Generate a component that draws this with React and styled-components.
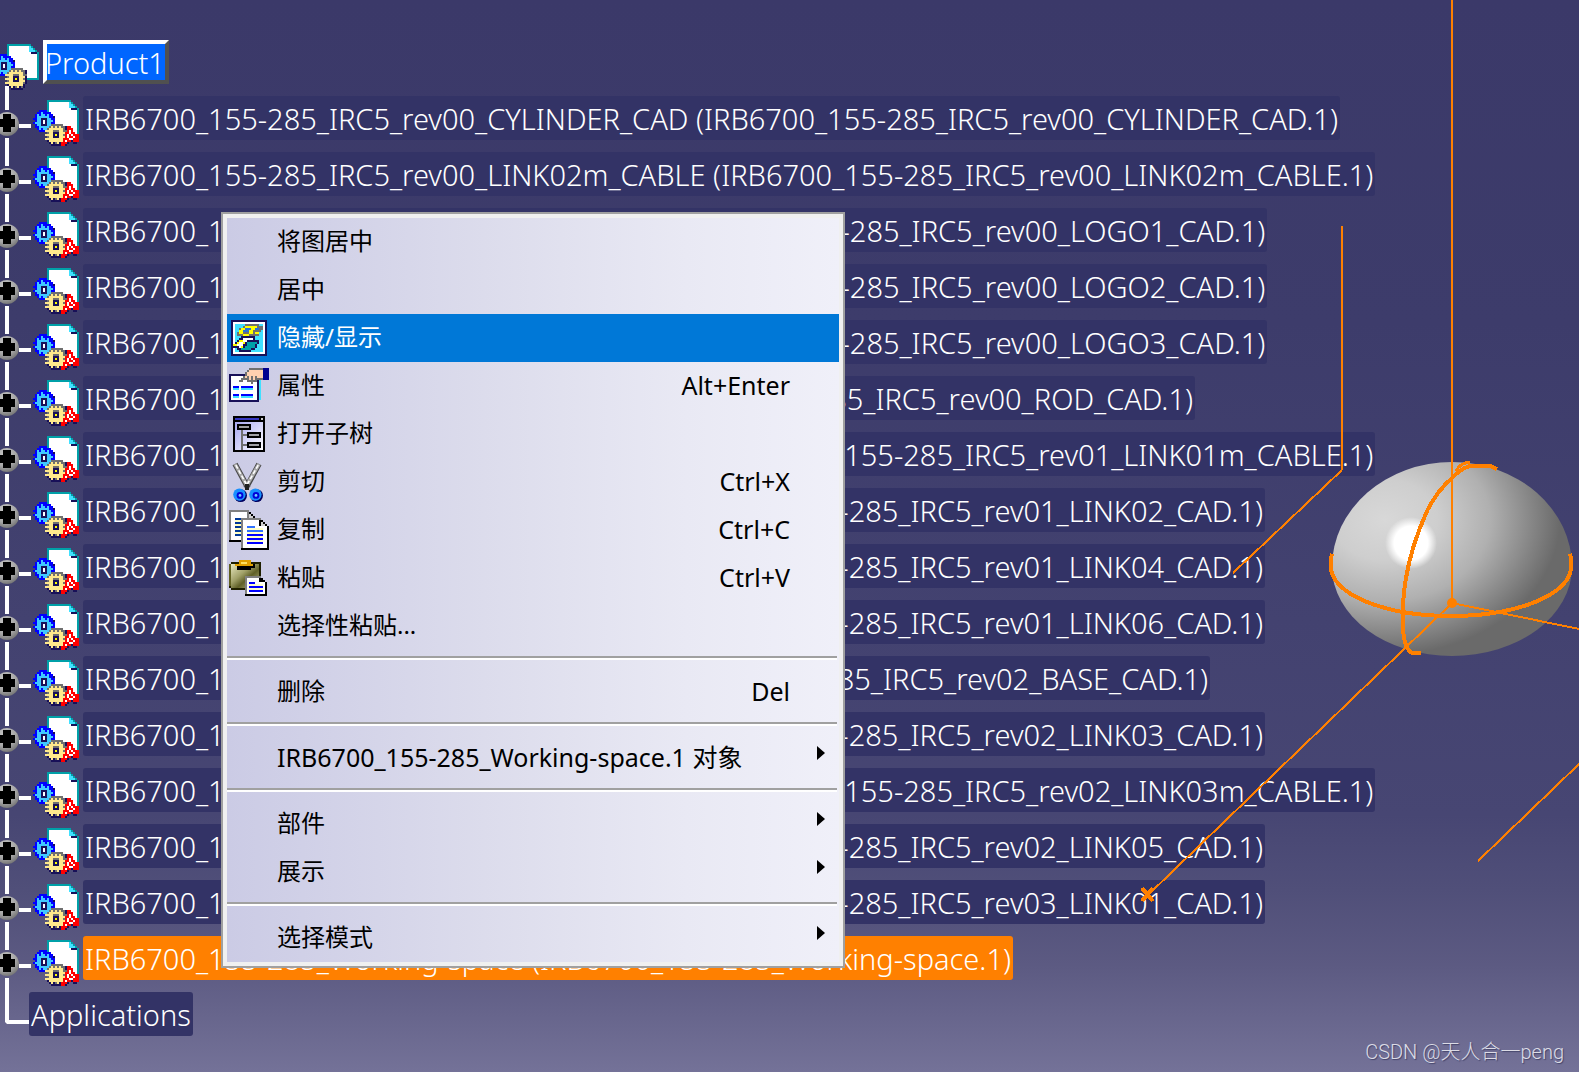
import React from 'react';
import styled, { createGlobalStyle } from 'styled-components';

const GlobalStyle = createGlobalStyle`
  *, *::before, *::after { box-sizing: border-box; }
  body { margin: 0; font-family: 'Noto Sans', 'Noto Sans CJK SC', sans-serif; }
  button { font: inherit; color: inherit; background: none; border: 0; margin: 0; padding: 0; text-align: left; }
`;

const Viewport = styled.main`
  position: relative;
  min-height: 100vh;
  overflow: hidden;
  background: linear-gradient(180deg, #3b3969 0%, #3d3c6b 30%, #434270 58%, #474673 76%, #504f79 83%, #5c5a82 90%, #747298 100%);
`;

const Tree = styled.ul`
  list-style: none;
  margin: 0;
  padding: 40px 0 0;
  color: #fff;
  font-size: 29px;
  font-weight: 300;
`;

const TreeRow = styled.li`
  display: flex;
  align-items: flex-start;
  height: 56px;
`;

const Toggle = styled.button`
  flex: none;
  width: 31px;
  height: 56px;
  margin-right: 2px;
`;

const RowArt = styled.svg`
  display: block;
  flex: none;
  width: ${p => p.$width}px;
  height: 56px;
`;

const NodeLabel = styled.button`
  height: 44px;
  margin-left: 4px;
  padding: 2px 2px 0;
  line-height: 42px;
  white-space: pre;
  border-radius: 3px;
  background: ${p => (p.$active ? '#ff8000' : '#333366')};
`;

const RootLabel = styled(NodeLabel)`
  width: 126px;
  line-height: 34px;
  padding: 2px 0 0;
  text-indent: -2px;
  border: 4px solid;
  border-color: #fff #505050 #505050 #fff;
  border-radius: 0;
  background: #0066ff;
`;

const EndLabel = styled(NodeLabel)`
  margin-left: -2px;
`;

const Scene = styled.svg`
  position: absolute;
  top: 0;
  left: 0;
  width: 100%;
  height: 100%;
  pointer-events: none;
`;

const Menu = styled.div`
  position: absolute;
  top: 212px;
  left: 221px;
  width: 624px;
  padding: 4px;
  border: 2px solid #a0a0a0;
  background: linear-gradient(90deg, #cbcbe5 0%, #dcdcec 42%, #e9e9f4 75%, #f0f0f9 100%) content-box, #f0f0f0;
  color: #000;
  font-size: 24px;
`;

const MenuItem = styled.button`
  display: flex;
  align-items: center;
  width: 100%;
  height: 48px;
  padding-left: 2px;
  white-space: pre;
  color: ${p => (p.$active ? '#fff' : '#000')};
  background: ${p => (p.$active ? '#0078d7' : 'transparent')};
`;

const IconSlot = styled.span`
  flex: none;
  width: 40px;
  height: 40px;
  margin-right: 8px;
  svg { display: block; width: 40px; height: 40px; }
`;

const ItemText = styled.span`
  flex: 1;
  padding-bottom: 2px;
  line-height: 46px;
  font-size: ${p => (p.$latin ? 25 : 24)}px;
`;

const Shortcut = styled.span`
  margin-right: 49px;
  padding-bottom: 2px;
  line-height: 46px;
  font-size: 25px;
`;

const SubArrow = styled.span`
  align-self: flex-start;
  margin: 12px 14px 0 0;
  border: solid transparent;
  border-width: 7px 0 7px 8px;
  border-left-color: #000;
`;

const Separator = styled.hr`
  height: 4px;
  margin: 6px 2px 8px 0;
  border: 0;
  border-top: 2px solid #a0a0a0;
  border-bottom: 2px solid #fff;
`;

const Watermark = styled.footer`
  position: absolute;
  right: 15px;
  bottom: 7px;
  font: 300 20px/26px Roboto, 'Noto Sans CJK SC', sans-serif;
  color: #dcdce6;
  text-shadow: 1px 1px 1px #44446a;
`;

const COLORS = {
  n: '#181058', b: '#0000ff', c: '#40c8ff', w: '#ffffff', g: '#707070',
  y: '#ffe98c', Y: '#ffff00', r: '#ff0000',
};

function Pixels({ map, x = 0, y = 0 }) {
  return (
    <g transform={`translate(${x} ${y})`} shapeRendering="crispEdges">
      {map.map((line, row) =>
        [...line].map((ch, col) =>
          COLORS[ch] ? <rect key={`${row}-${col}`} x={col} y={row} width="1" height="1" fill={COLORS[ch]} /> : null
        )
      )}
    </g>
  );
}

const BLUE_GEAR = [
  '...bbbb....',
  '..bbcbbbb..',
  '.bcbccbcbb.',
  '.bccccccbbn',
  'bbccnnnccbb',
  '.bccnwncccb',
  'bcccnwnccbb',
  '.bccnnnccbn',
  '.bbccccccb.',
  '..bcbccbbn.',
  '...bbbbnn..',
];
const YELLOW_GEAR = [
  '...gggggg..',
  '..gygygyggn',
  '.gyyyyyyygn',
  'yyyygggyygg',
  '.gyynnnyyyn',
  'yyyynYnyygn',
  '.gyynnnyyyn',
  'yyyyyyyyygn',
  '.nyyyyyyyn.',
  '..nyngyngn.',
  '...nnnnnn..',
];
const RED_MARK = [
  '...rr....',
  '...rrr...',
  '...rwr...',
  '..rrwrr..',
  '..rwrwrrr',
  '..rwrrwrr',
  '.rrrwwrrr',
  '.rwrrnrrr',
  'rrrn..nn.',
  'rrn......',
];

function ProductIcon({ mark }) {
  return (
    <>
      <g shapeRendering="crispEdges">
        <path d="M7 0H19V1H20V2H21V3H22V4H23V18H7Z" fill="#00a0a8" />
        <path d="M8 1H18V4H22V17H8Z" fill="#fff" />
        <path d="M18 1H19V2H20V3H21V4H18Z" fill="#40e0ff" />
        <path d="M18 4H22V5H19V4Z" fill="#181058" />
      </g>
      <Pixels map={BLUE_GEAR} x={0} y={5} />
      <Pixels map={YELLOW_GEAR} x={6} y={12} />
      {mark && <Pixels map={RED_MARK} x={14} y={13} />}
    </>
  );
}

function Expander() {
  return (
    <RowArt $width={31} viewBox="0 0 31 56" aria-hidden="true">
      <path d="M5 0H9V14H5ZM5 42H9V56H5ZM19 28H31V32H19Z" fill="#fff" />
      <circle cx="7" cy="28" r="12" fill="url(#ball)" />
      <path d="M3 18H11V23H15V31H11V36H3V31H-1V23H3Z" fill="#000" />
    </RowArt>
  );
}

const node = name => `IRB6700_155-285_${name} (IRB6700_155-285_${name}.1)`;

const NODES = [
  'IRC5_rev00_CYLINDER_CAD', 'IRC5_rev00_LINK02m_CABLE', 'IRC5_rev00_LOGO1_CAD', 'IRC5_rev00_LOGO2_CAD',
  'IRC5_rev00_LOGO3_CAD', 'IRC5_rev00_ROD_CAD', 'IRC5_rev01_LINK01m_CABLE', 'IRC5_rev01_LINK02_CAD',
  'IRC5_rev01_LINK04_CAD', 'IRC5_rev01_LINK06_CAD', 'IRC5_rev02_BASE_CAD', 'IRC5_rev02_LINK03_CAD',
  'IRC5_rev02_LINK03m_CABLE', 'IRC5_rev02_LINK05_CAD', 'IRC5_rev03_LINK01_CAD', 'Working-space',
];

const HideShowIcon = () => (
  <svg viewBox="0 0 20 20" shapeRendering="crispEdges">
    <path d="M1 1H19V19H1Z" fill="#181058" />
    <path d="M2 2H18V18H2Z" fill="#fff" />
    <path d="M3 3H17V17H3Z" fill="#40e0ff" />
    <path d="M8 3H15V4H17V6H16V7H15V9H12V10H6V9H4V7H5V5H7V4H8Z" fill="#707070" />
    <path d="M8 4H14V5H8ZM6 5H8V6H6ZM11 5H13V6H11ZM5 6H7V8H5ZM10 6H12V8H10ZM7 8H10V9H7ZM13 7H15V8H13Z" fill="#ffff00" />
    <path d="M8 5H11V6H10V7H7V6H8ZM13 5H15V6H13Z" fill="#2870d8" />
    <path d="M6 9H13V11H15V13H14V15H13V16H11V17H5V16H4V15H2V13H3V12H4V11H5V10H6Z" fill="#181058" />
    <path d="M7 10H12V11H9V12H8V13H7V14H6V15H5V14H3V13H4V12H5V11H7Z" fill="#fff" />
    <path d="M5 11H7V12H5ZM4 12H5V13H4ZM7 12H8V13H7ZM2 13H4V14H2ZM6 14H7V15H6Z" fill="#ffff00" />
    <path d="M9 12H14V13H13V15H11V16H6V15H8V14H9Z" fill="#00a0a8" />
  </svg>
);

const PropertiesIcon = () => (
  <svg viewBox="0 0 20 20" shapeRendering="crispEdges">
    <path d="M15 7H16V17H15Z" fill="#40e0ff" />
    <path d="M0 4H15V18H0Z" fill="#181058" />
    <path d="M1 5H14V17H1Z" fill="#fff" />
    <path d="M2 10H5V11H2ZM6 10H12V11H6ZM2 14H5V15H2ZM6 14H12V15H6Z" fill="#0000ff" />
    <path d="M2 11H5V12H2ZM6 11H12V12H6ZM2 15H5V16H2ZM6 15H12V16H6Z" fill="#40e0ff" />
    <path d="M10 1H17V7H14V8H12V9H11V8H9V7H7V8H5V7H6V6H7V5H8V3H9V2H10Z" fill="#707070" />
    <path d="M10 2H17V6H14V5H13V7H12V5H11V7H10V5H9V6H8V5H9V3H10Z" fill="#ffd0b0" />
    <path d="M17 1H20V7H17Z" fill="#000090" />
  </svg>
);

const SubtreeIcon = () => (
  <svg viewBox="0 0 20 20" shapeRendering="crispEdges">
    <path d="M2 1H18V19H2Z" fill="#000" />
    <path d="M3 4H17V18H3Z" fill="url(#pane)" />
    <path d="M3 2H15V3H3Z" fill="#3838c0" />
    <path d="M16 2H17V3H16Z" fill="#ccc" />
    <path d="M6 7H7V18H6ZM7 10H9V11H7ZM7 15H9V16H7Z" fill="#707070" />
    <path d="M4 5H11V8H4ZM9 9H16V12H9ZM9 14H16V17H9Z" fill="#000" />
    <path d="M5 6H10V7H5ZM10 10H15V11H10ZM10 15H15V16H10Z" fill="#a0a0a4" />
  </svg>
);

const CutIcon = () => (
  <svg viewBox="0 0 20 20">
    <path d="M3 1L9.500 13M15 1L8.500 13" stroke="#484848" strokeWidth="2.800" />
    <path d="M3 1L8.800 11.500M15 1L9 11.500" stroke="#a8a8a8" strokeWidth="1.800" />
    <path d="M3.400 1.600L8.600 11M14.600 1.600L9.200 11" stroke="#fff" strokeWidth=".8" strokeDasharray="2 1" />
    <path d="M8 11H10V14H8Z" fill="#202020" />
    <circle cx="5.800" cy="16.800" r="3.200" fill="#000060" />
    <circle cx="13.800" cy="16.800" r="3.200" fill="#000060" />
    <circle cx="5.200" cy="16.300" r="3.100" fill="#1890ff" />
    <circle cx="13.200" cy="16.300" r="3.100" fill="#1890ff" />
    <circle cx="5.500" cy="16.700" r="1.700" fill="#0000d8" />
    <circle cx="13.500" cy="16.700" r="1.700" fill="#0000d8" />
    <circle cx="5.500" cy="16.700" r=".7" fill="#70d0ff" />
    <circle cx="13.500" cy="16.700" r=".7" fill="#70d0ff" />
  </svg>
);

const CopyIcon = () => (
  <svg viewBox="0 0 20 20" shapeRendering="crispEdges">
    <path d="M0 0H10V1H11V2H12V3H13V4H14V16H0Z" fill="#000" />
    <path d="M0 0H10V4H6V15H0Z" fill="#808080" />
    <path d="M1 1H9V4H6V15H1Z" fill="#fff" />
    <path d="M10 2H11V3H12V4H10Z" fill="#d0d0d0" />
    <path d="M3 4H6V5H3ZM3 6H6V7H3ZM3 8H6V9H3ZM3 10H6V11H3ZM3 12H6V13H3Z" fill="#003898" />
    <path d="M3 5H6V6H3ZM3 7H6V8H3ZM3 9H6V10H3ZM3 11H6V12H3Z" fill="#ffffc0" />
    <path d="M6 4H16V5H17V6H18V7H19V8H20V20H6Z" fill="#000" />
    <path d="M6 4H16V5H7V19H6Z" fill="#808080" />
    <path d="M7 5H15V8H19V19H7Z" fill="#fff" />
    <path d="M16 6H17V7H18V8H16Z" fill="#d0d0d0" />
    <path d="M9 8H13V9H9ZM9 10H17V11H9Z" fill="#3070ff" />
    <path d="M9 12H17V13H9ZM9 14H17V15H9ZM9 16H17V17H9Z" fill="#0000ff" />
    <path d="M9 9H17V10H9ZM9 11H17V12H9ZM9 13H17V14H9ZM9 15H17V16H9Z" fill="#ffffc8" />
  </svg>
);

const PasteIcon = () => (
  <svg viewBox="0 0 20 20" shapeRendering="crispEdges">
    <path d="M1 2H16V15H15V16H1V15H0V3H1Z" fill="#202000" />
    <path d="M1 3H15V15H1Z" fill="url(#board)" />
    <path d="M0 3H1V14H0Z" fill="#606020" />
    <path d="M4 3H5V2H11V3H13V5H11V6H4Z" fill="#000" />
    <path d="M5 1H11V3H12V4H3V3H5Z" fill="#e0a000" />
    <path d="M6 2H9V3H6Z" fill="#ffe060" />
    <path d="M8 9H16V10H17V11H18V12H19V19H8Z" fill="#000" />
    <path d="M8 9H16V10H9V18H8Z" fill="#808080" />
    <path d="M9 10H15V12H18V18H9Z" fill="#fff" />
    <path d="M10 12H13V13H10ZM10 14H17V15H10ZM10 16H17V17H10Z" fill="#0000ff" />
    <path d="M10 13H17V14H10ZM10 15H17V16H10Z" fill="#ffffc8" />
  </svg>
);

const MENU = [
  { text: '将图居中' },
  { text: '居中' },
  { text: '隐藏/显示', icon: <HideShowIcon />, active: true },
  { text: '属性', icon: <PropertiesIcon />, keys: 'Alt+Enter' },
  { text: '打开子树', icon: <SubtreeIcon /> },
  { text: '剪切', icon: <CutIcon />, keys: 'Ctrl+X' },
  { text: '复制', icon: <CopyIcon />, keys: 'Ctrl+C' },
  { text: '粘贴', icon: <PasteIcon />, keys: 'Ctrl+V' },
  { text: '选择性粘贴...' },
  null,
  { text: '删除', keys: 'Del' },
  null,
  { text: 'IRB6700_155-285_Working-space.1 对象', latin: true, sub: true },
  null,
  { text: '部件', sub: true },
  { text: '展示', sub: true },
  null,
  { text: '选择模式', sub: true },
];

function ModelView() {
  return (
    <Scene aria-hidden="true">
      <defs>
        <radialGradient id="solid" gradientUnits="userSpaceOnUse" cx="0" cy="0" r="1" gradientTransform="translate(1385 520) scale(175 135)">
          <stop offset="0" stopColor="#d8d8d8" />
          <stop offset=".3" stopColor="#cecece" />
          <stop offset=".6" stopColor="#b0b0b0" />
          <stop offset="1" stopColor="#6a6a6a" />
        </radialGradient>
        <radialGradient id="glint">
          <stop offset="0" stopColor="#fff" />
          <stop offset=".65" stopColor="#fff" />
          <stop offset="1" stopColor="#fff" stopOpacity="0" />
        </radialGradient>
        <radialGradient id="ball" cx=".4" cy=".3" r=".75">
          <stop offset="0" stopColor="#c8c8c8" />
          <stop offset=".6" stopColor="#a8a8a8" />
          <stop offset="1" stopColor="#707070" />
        </radialGradient>
        <linearGradient id="pane" x2="1" y2="1">
          <stop offset="0" stopColor="#a8a8f0" />
          <stop offset="1" stopColor="#fff" />
        </linearGradient>
        <linearGradient id="board" x2="1" y2="1">
          <stop offset="0" stopColor="#e8e8c0" />
          <stop offset=".4" stopColor="#a0a068" />
          <stop offset=".6" stopColor="#606028" />
          <stop offset="1" stopColor="#c0c090" />
        </linearGradient>
      </defs>
      <path d="M1332 567A120 105 0 0 1 1572 567A120 89 0 0 1 1332 567Z" fill="url(#solid)" />
      <circle cx="1411" cy="543" r="26" fill="url(#glint)" />
      <g fill="none" stroke="#ff8000" shapeRendering="crispEdges">
        <path d="M1332 554Q1330 560 1331 567A120 49 0 0 0 1571 567Q1572 560 1570 554" strokeWidth="4" />
        <path d="M1497 469L1490 466H1470Q1460 469 1452 478Q1437 491 1427 511Q1411 547 1406 578Q1402 600 1403 630Q1405 650 1412 653H1421" strokeWidth="4" />
        <path d="M1456 471Q1460 463 1470 462" strokeWidth="3" />
        <path d="M1452 0V603M1342 226V470" strokeWidth="2" />
        <path d="M1452 603L1579 629" strokeWidth="2" />
        <path d="M1342 470L1233 573M1452 603L1148 895M1579 764L1478 861" strokeWidth="2" />
        <path d="M1142 888L1153 901M1153 888L1142 901" strokeWidth="4" />
      </g>
      <circle cx="1452" cy="603" r="5" fill="#ff8000" />
    </Scene>
  );
}

export default function App() {
  return (
    <Viewport>
      <GlobalStyle />
      <Tree>
        <TreeRow>
          <RowArt $width={39} viewBox="3.5 -2 19.5 28" aria-hidden="true">
            <path d="M6 21H8V26H6Z" fill="#fff" />
            <ProductIcon />
          </RowArt>
          <RootLabel>Product1</RootLabel>
        </TreeRow>
        {NODES.map((name, i) => (
          <TreeRow key={name}>
            <Toggle aria-label={`Expand ${name}`}><Expander /></Toggle>
            <RowArt $width={46} viewBox="0 -2 23 28" aria-hidden="true"><ProductIcon mark /></RowArt>
            <NodeLabel $active={i === NODES.length - 1}>{node(name)}</NodeLabel>
          </TreeRow>
        ))}
        <TreeRow>
          <RowArt $width={31} viewBox="0 0 31 56" aria-hidden="true">
            <path d="M5 0H9V28H31V32H7L5 30Z" fill="#fff" />
          </RowArt>
          <EndLabel>Applications</EndLabel>
        </TreeRow>
      </Tree>
      <ModelView />
      <Menu role="menu">
        {MENU.map((item, i) =>
          item ? (
            <MenuItem key={i} role="menuitem" $active={item.active}>
              <IconSlot>{item.icon}</IconSlot>
              <ItemText $latin={item.latin}>{item.text}</ItemText>
              {item.keys && <Shortcut>{item.keys}</Shortcut>}
              {item.sub && <SubArrow />}
            </MenuItem>
          ) : (
            <Separator key={i} />
          )
        )}
      </Menu>
      <Watermark>CSDN @天人合一peng</Watermark>
    </Viewport>
  );
}
